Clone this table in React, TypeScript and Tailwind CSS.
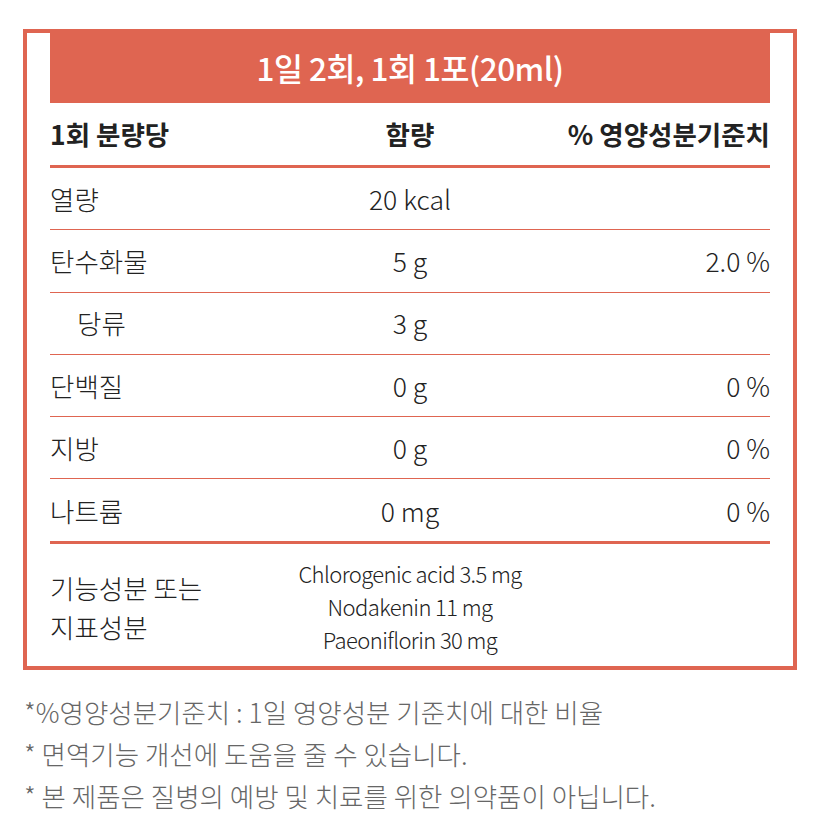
const rows = [
  { name: '열량', amount: '20 kcal', pct: '', indent: false },
  { name: '탄수화물', amount: '5 g', pct: '2.0 %', indent: false },
  { name: '당류', amount: '3 g', pct: '', indent: true },
  { name: '단백질', amount: '0 g', pct: '0 %', indent: false },
  { name: '지방', amount: '0 g', pct: '0 %', indent: false },
  { name: '나트륨', amount: '0 mg', pct: '0 %', indent: false },
];

const notes = [
  '*%영양성분기준치 : 1일 영양성분 기준치에 대한 비율',
  '* 면역기능 개선에 도움을 줄 수 있습니다.',
  '* 본 제품은 질병의 예방 및 치료를 위한 의약품이 아닙니다.',
];

export default function App() {
  return (
    <div className="w-[832px] h-[838px] bg-white pt-[29px] font-['Noto_Sans_CJK_KR',sans-serif] text-[#222]">
      <div className="ml-[23px] w-[774px] border-4 border-[#df6551] px-[23px]">
        <div className="h-[70px] bg-[#df6551] flex items-center justify-center text-white text-[31.5px] font-medium tracking-[-0.5px]">
          1일 2회, 1회 1포(20ml)
        </div>

        <div className="grid grid-cols-3 items-center h-[65px] border-b-[3px] border-[#df6551] text-[26.5px] font-bold">
          <div>1회 분량당</div>
          <div className="text-center">함량</div>
          <div className="text-right whitespace-nowrap">% 영양성분기준치</div>
        </div>

        {rows.map((r, i) => (
          <div
            key={r.name}
            className={
              i === rows.length - 1
                ? 'grid grid-cols-3 items-center h-[65px] border-b-[3px] border-[#df6551] text-[26.5px] font-light'
                : 'grid grid-cols-3 items-center h-[62.3px] border-b border-[#df6551] text-[26.5px] font-light'
            }
          >
            <div className={r.indent ? 'pl-[27px]' : ''}>{r.name}</div>
            <div className="text-center">{r.amount}</div>
            <div className="text-right">{r.pct}</div>
          </div>
        ))}

        <div className="grid grid-cols-3 items-center h-[122px] font-light">
          <div className="text-[26.5px] leading-[39px] pt-[4px] whitespace-nowrap">
            기능성분 또는
            <br />
            지표성분
          </div>
          <div className="text-center text-[22px] leading-[33px] tracking-[-0.6px] whitespace-nowrap pt-[3px]">
            <div>Chlorogenic acid 3.5 mg</div>
            <div>Nodakenin 11 mg</div>
            <div>Paeoniflorin 30 mg</div>
          </div>
          <div />
        </div>
      </div>

      <div className="ml-[24px] mt-[21px] text-[26.5px] leading-[42px] text-[#666] font-light whitespace-nowrap">
        {notes.map((n) => (
          <div key={n}>{n}</div>
        ))}
      </div>
    </div>
  );
}
